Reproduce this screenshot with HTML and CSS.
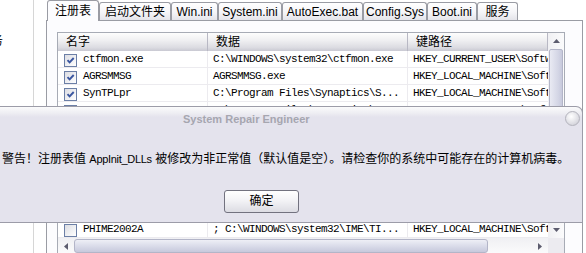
FILE: index.html
```html
<!DOCTYPE html>
<html lang="zh-CN">
<head>
    <meta charset="UTF-8">
    <title>System Repair Engineer</title>
    <link rel="stylesheet" href="styles.css">
</head>
<body>
<div class="window">
    <div class="tree">
        <div class="tree-item">服务</div>
    </div>
    <div class="spacer"></div>
    <div class="tabs">
        <div class="tab-strip">
            <div class="tab active w1">注册表</div>
            <div class="tab w2">启动文件夹</div>
            <div class="tab w3">Win.ini</div>
            <div class="tab w4">System.ini</div>
            <div class="tab w5">AutoExec.bat</div>
            <div class="tab w6">Config.Sys</div>
            <div class="tab w7">Boot.ini</div>
            <div class="tab w8">服务</div>
        </div>
        <div class="tab-pane">
            <div class="listview">
                <div class="lv-content">
                    <div class="lv-header">
                        <div class="hcell c1">名字</div>
                        <div class="hcell c2">数据</div>
                        <div class="hcell c3">键路径</div>
                    </div>
                    <!-- 启动项 -->
                    <div class="lv-row">
                        <div class="cell c1"><span class="check on"><svg width="11" height="11"><path d="M2.5 5.2 L4.6 7.4 L8.7 3" /></svg></span>ctfmon.exe</div>
                        <div class="cell c2">C:\WINDOWS\system32\ctfmon.exe</div>
                        <div class="cell c3">HKEY_CURRENT_USER\Software\Microsoft\Windows\CurrentVersion\Run</div>
                    </div>
                    <div class="lv-row">
                        <div class="cell c1"><span class="check on"><svg width="11" height="11"><path d="M2.5 5.2 L4.6 7.4 L8.7 3" /></svg></span>AGRSMMSG</div>
                        <div class="cell c2">AGRSMMSG.exe</div>
                        <div class="cell c3">HKEY_LOCAL_MACHINE\Software\Microsoft\Windows\CurrentVersion\Run</div>
                    </div>
                    <div class="lv-row">
                        <div class="cell c1"><span class="check on"><svg width="11" height="11"><path d="M2.5 5.2 L4.6 7.4 L8.7 3" /></svg></span>SynTPLpr</div>
                        <div class="cell c2">C:\Program Files\Synaptics\S...</div>
                        <div class="cell c3">HKEY_LOCAL_MACHINE\Software\Microsoft\Windows\CurrentVersion\Run</div>
                    </div>
                    <div class="lv-row">
                        <div class="cell c1"><span class="check on"><svg width="11" height="11"><path d="M2.5 5.2 L4.6 7.4 L8.7 3" /></svg></span>SynTPStart</div>
                        <div class="cell c2">C:\Program Files\Synaptics\S...</div>
                        <div class="cell c3">HKEY_LOCAL_MACHINE\Software\Microsoft\Windows\CurrentVersion\Run</div>
                    </div>
                    <div class="lv-row">
                        <div class="cell c1"><span class="check on"><svg width="11" height="11"><path d="M2.5 5.2 L4.6 7.4 L8.7 3" /></svg></span>SoundMan</div>
                        <div class="cell c2">SOUNDMAN.EXE</div>
                        <div class="cell c3">HKEY_LOCAL_MACHINE\Software\Microsoft\Windows\CurrentVersion\Run</div>
                    </div>
                    <div class="lv-row">
                        <div class="cell c1"><span class="check on"><svg width="11" height="11"><path d="M2.5 5.2 L4.6 7.4 L8.7 3" /></svg></span>IMJPMIG8.1</div>
                        <div class="cell c2">"C:\WINDOWS\IME\imjp8_1\IM...</div>
                        <div class="cell c3">HKEY_LOCAL_MACHINE\Software\Microsoft\Windows\CurrentVersion\Run</div>
                    </div>
                    <div class="lv-row">
                        <div class="cell c1"><span class="check on"><svg width="11" height="11"><path d="M2.5 5.2 L4.6 7.4 L8.7 3" /></svg></span>MSPY2002</div>
                        <div class="cell c2">C:\WINDOWS\system32\IME\PI...</div>
                        <div class="cell c3">HKEY_LOCAL_MACHINE\Software\Microsoft\Windows\CurrentVersion\Run</div>
                    </div>
                    <div class="lv-row">
                        <div class="cell c1"><span class="check on"><svg width="11" height="11"><path d="M2.5 5.2 L4.6 7.4 L8.7 3" /></svg></span>PHIME2002ASync</div>
                        <div class="cell c2">C:\WINDOWS\system32\IME\TI...</div>
                        <div class="cell c3">HKEY_LOCAL_MACHINE\Software\Microsoft\Windows\CurrentVersion\Run</div>
                    </div>
                    <div class="lv-row">
                        <div class="cell c1"><span class="check"></span>TkBellExe</div>
                        <div class="cell c2">C:\Program Files\Common Fi...</div>
                        <div class="cell c3">HKEY_LOCAL_MACHINE\Software\Microsoft\Windows\CurrentVersion\Run</div>
                    </div>
                    <div class="lv-row">
                        <div class="cell c1"><span class="check"></span>QuickTime Task</div>
                        <div class="cell c2">"C:\Program Files\QuickTim...</div>
                        <div class="cell c3">HKEY_LOCAL_MACHINE\Software\Microsoft\Windows\CurrentVersion\Run</div>
                    </div>
                    <div class="lv-row">
                        <div class="cell c1"><span class="check"></span>PHIME2002A</div>
                        <div class="cell c2">; C:\WINDOWS\system32\IME\TI...</div>
                        <div class="cell c3">HKEY_LOCAL_MACHINE\Software\Microsoft\Windows\CurrentVersion\Run</div>
                    </div>
                </div>
                <div class="vscroll">
                    <div class="sb-btn"><svg width="7" height="4"><path d="M3.5 0 L7 4 L0 4 Z" /></svg></div>
                    <div class="vthumb"></div>
                    <div class="sb-track"></div>
                    <div class="sb-btn"><svg width="7" height="4"><path d="M0 0 L7 0 L3.5 4 Z" /></svg></div>
                </div>
                <div class="hscroll">
                    <div class="sb-btn"><svg width="4" height="7"><path d="M0 3.5 L4 0 L4 7 Z" /></svg></div>
                    <div class="hthumb"></div>
                    <div class="sb-track"></div>
                    <div class="sb-btn"><svg width="4" height="7"><path d="M0 0 L4 3.5 L0 7 Z" /></svg></div>
                </div>
                <div class="corner"></div>
            </div>
        </div>
    </div>

    <div class="dialog">
        <div class="dlg-title">System Repair Engineer</div>
        <span class="dlg-close"></span>
        <div class="dlg-msg">警告！注册表值 <span class="latin">AppInit_DLLs</span> 被修改为非正常值（默认值是空）。请检查你的系统中可能存在的计算机病毒。</div>
        <button class="dlg-btn">确定</button>
    </div>
</div>
</body>
</html>
```

FILE: styles.css
```css
body {
    margin: 0;
    background-color: #fff;
    font-family: "Liberation Sans", "Noto Sans CJK SC", sans-serif;
    font-size: 12px;
    color: #000;
    overflow: hidden;
}
.window {
    position: relative;
    display: flex;
    height: 253px;
    overflow: hidden;
}
.tree {
    width: 33px;
    border-right: 1px solid #d6d6d6;
    overflow: hidden;
}
.tree-item {
    margin-top: 34px;
    margin-left: -21px;
    white-space: nowrap;
    line-height: 14px;
}
.spacer {
    width: 12px;
}
.tabs {
    width: 537px;
    display: flex;
    flex-direction: column;
}

/* タブ */
.tab-strip {
    display: flex;
    align-items: flex-start;
    height: 20px;
    padding-left: 1px;
    position: relative;
    z-index: 1;
}
.tab {
    box-sizing: border-box;
    height: 18px;
    margin-top: 2px;
    padding-top: 2px;
    border: 1px solid #9a9ca4;
    border-bottom: none;
    border-radius: 3px 3px 0 0;
    background: linear-gradient(#ffffff, #f5f5f8 55%, #e4e4ea);
    text-align: center;
    line-height: 14px;
    white-space: nowrap;
}
.tab.active {
    height: 21px;
    margin-top: 0;
    padding-top: 3px;
    background: #fcfcfe;
}
.w1 { width: 52px; }
.w2 { width: 72px; }
.w3 { width: 47px; }
.w4 { width: 64px; }
.w5 { width: 81px; }
.w6 { width: 64px; }
.w7 { width: 50px; }
.w8 { width: 41px; }

.tab-pane {
    flex: 1;
    border: 1px solid #9a9ca4;
    background-color: #fcfcfe;
    padding: 11px 0 0 10px;
}

/* リストビュー */
.listview {
    width: 506px;
    border: 1px solid #a7abb5;
    background-color: #fff;
    display: grid;
    grid-template-columns: 490px 16px;
    grid-template-rows: 205px 16px;
}
.lv-content {
    overflow: hidden;
}
.lv-header {
    display: flex;
    height: 18px;
    background: linear-gradient(#fdfdfd, #f0f0f2 40%, #dcdce2 80%, #c9c9d2);
}
.hcell {
    box-sizing: border-box;
    flex-shrink: 0;
    padding-left: 8px;
    border-right: 1px solid #b8b8c4;
    line-height: 18px;
    font-size: 12px;
}
.c1 { width: 150px; }
.c2 { width: 200px; }
.c3 { width: 140px; }
.lv-row {
    display: flex;
    box-sizing: border-box;
    height: 17px;
    border-bottom: 1px solid #ecebef;
}
.cell {
    box-sizing: border-box;
    flex-shrink: 0;
    display: flex;
    align-items: flex-start;
    padding-left: 5px;
    border-right: 1px solid #ecebef;
    font-family: "Liberation Mono", monospace;
    font-size: 11px;
    letter-spacing: -0.6px;
    line-height: 16px;
    white-space: pre;
    overflow: hidden;
}
.cell.c1 {
    padding-left: 6px;
}
.cell.c3 {
    border-right: none;
}
.check {
    box-sizing: border-box;
    flex-shrink: 0;
    width: 13px;
    height: 13px;
    margin: 3px 6px 0 0;
    border: 1px solid #6c7fa6;
    background: linear-gradient(135deg, #dcdde3, #ffffff);
}
.check svg {
    display: block;
}
.check path {
    fill: none;
    stroke: #3a56a0;
    stroke-width: 1.9;
}

/* スクロールバー */
.vscroll {
    display: flex;
    flex-direction: column;
    background: linear-gradient(90deg, #f0f0f3, #fbfbfc);
}
.hscroll {
    display: flex;
    background: linear-gradient(#f0f0f3, #fbfbfc);
}
.sb-btn {
    flex-shrink: 0;
    width: 16px;
    height: 16px;
    display: flex;
    align-items: center;
    justify-content: center;
}
.sb-btn path {
    fill: #5c5c6e;
}
.sb-track {
    flex: 1;
}
.vthumb {
    height: 150px;
    margin: 0 1px;
    border: 1px solid #b3b5c8;
    border-radius: 2px;
    background: linear-gradient(90deg, #e9eaf3, #d3d5e5 70%, #c7c9dc);
}
.hthumb {
    width: 412px;
    margin: 1px 0;
    border: 1px solid #b3b5c8;
    border-radius: 3px;
    background: linear-gradient(#eeeff6, #d6d8e7 60%, #c7c9dc);
}
.corner {
    background-color: #ecebf0;
}

/* ダイアログ */
.dialog {
    position: absolute;
    left: -1px;
    top: 106px;
    width: 584px;
    height: 117px;
    box-sizing: border-box;
    border: 1px solid #9c9ca8;
    border-left: none;
    border-top-right-radius: 7px;
    background: linear-gradient(#fbfbfc, #eeeef3 6px, #e4e3ed 10px);
    z-index: 2;
}
.dlg-title {
    padding: 5px 0 0 184px;
    font-family: "Liberation Sans", sans-serif;
    font-weight: bold;
    font-size: 11px;
    line-height: 14px;
    color: #a6a6b0;
}
.dlg-close {
    position: absolute;
    right: 2px;
    top: 4px;
    width: 15px;
    height: 15px;
    box-sizing: border-box;
    border: 1px solid #b3b3bc;
    border-radius: 50%;
    background: radial-gradient(circle at 40% 35%, #ffffff, #dedee4 60%, #c6c6ce);
}
.dlg-msg {
    margin-top: 25px;
    padding-left: 3px;
    line-height: 16px;
    white-space: nowrap;
}
.latin {
    font-size: 11px;
    letter-spacing: -0.3px;
}
.dlg-btn {
    display: block;
    margin: 23px 0 0 225px;
    width: 75px;
    height: 23px;
    border: 1px solid #72727f;
    border-radius: 3px;
    background: linear-gradient(#ffffff, #f3f3f6 45%, #dcdce3);
    font-family: "Liberation Sans", "Noto Sans CJK SC", sans-serif;
    font-size: 12px;
    line-height: 19px;
    padding: 0;
    color: #000;
}
```
